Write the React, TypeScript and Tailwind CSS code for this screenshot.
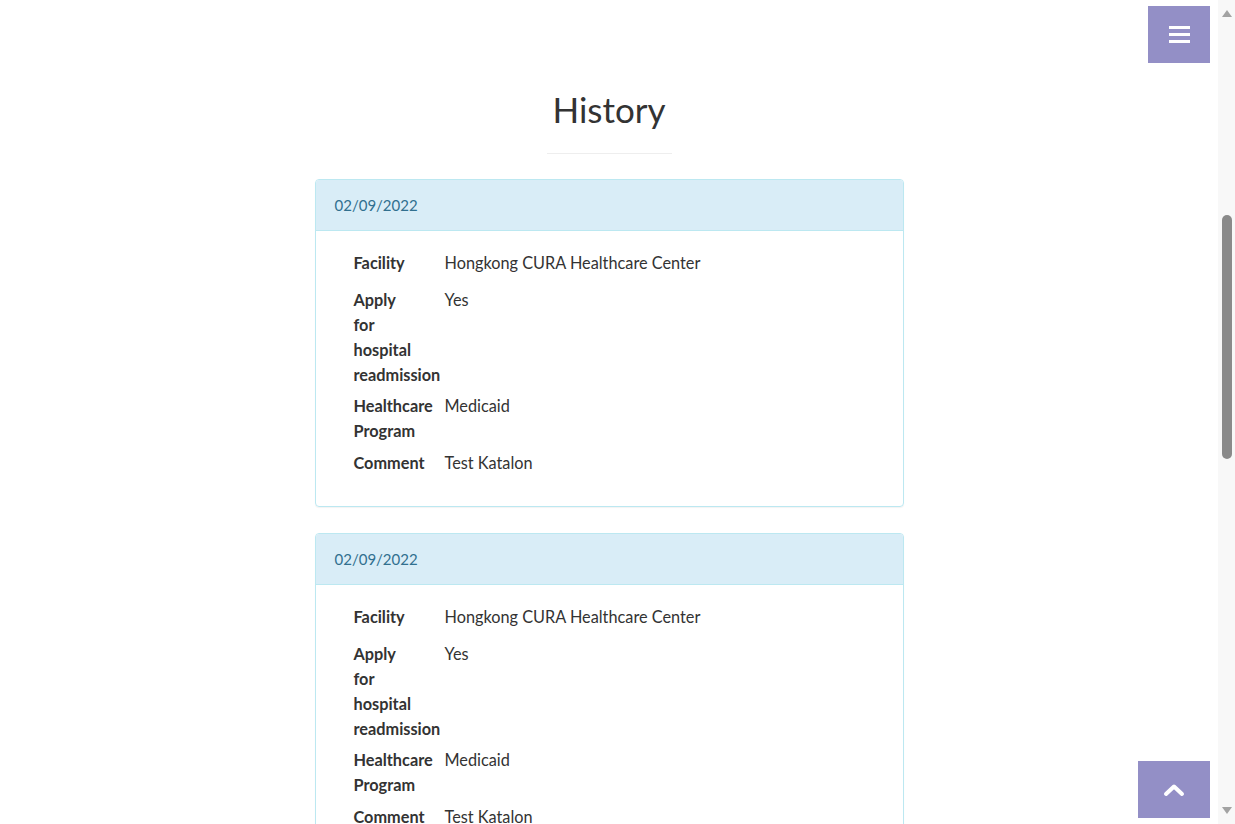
import React from 'react';

const entries = [
  { date: '02/09/2022', facility: 'Hongkong CURA Healthcare Center', readmission: 'Yes', program: 'Medicaid', comment: 'Test Katalon' },
  { date: '02/09/2022', facility: 'Hongkong CURA Healthcare Center', readmission: 'Yes', program: 'Medicaid', comment: 'Test Katalon' },
];

const Row = ({ label, value, className = '' }: { label: string; value: string; className?: string }) => (
  <div className={`grid grid-cols-[91px_1fr] ${className}`}>
    <div className="font-bold text-[#333] whitespace-nowrap">
      {label.split(' ').map((w, i) => (
        <span key={i} className="block">{w}</span>
      ))}
    </div>
    <div className="text-[#333]">{value}</div>
  </div>
);

// page scrollbar as seen in the screenshot
const ScrollBar = () => (
  <div className="w-[17px] h-screen bg-[#f8f8f8] flex flex-col items-center justify-between py-[10px] shrink-0">
    <svg width="10" height="7" viewBox="0 0 10 7"><path d="M5 0 L10 7 L0 7 Z" fill="#a3a3a3" /></svg>
    <div className="flex-1 w-full flex flex-col items-center">
      <div className="h-[198px]" />
      <div className="w-[10px] h-[244px] rounded-full bg-[#8a8a8a]" />
    </div>
    <svg width="10" height="7" viewBox="0 0 10 7"><path d="M0 0 L10 0 L5 7 Z" fill="#a3a3a3" /></svg>
  </div>
);

export default function App() {
  return (
    <div className="h-screen overflow-hidden flex bg-white font-['Lato','Liberation_Sans',sans-serif] text-[16.3px] leading-[25px] text-[#333]">
      <main className="flex-1 min-w-0 overflow-hidden">
        <section className="pt-[80px]">
          <div className="flex flex-col items-center">
            <h2 className="text-[35px] leading-[58px] font-normal text-[#333]">History</h2>
            <hr className="w-[125px] mt-[15px] border-0 border-t border-[#eee]" />
          </div>

          <div className="w-[589px] mx-auto mt-[25px] flex flex-col gap-[26px]">
            {entries.map((e, i) => (
              <div key={i} className="border border-[#bce8f1] rounded-[4px] shadow-[0_1px_1px_rgba(0,0,0,0.05)] overflow-hidden">
                <div className="h-[51px] bg-[#d9edf7] border-b border-[#bce8f1] px-[19px] flex items-center text-[#31708f] text-[15px]">
                  {e.date}
                </div>
                <div className="pl-[38px] pr-[15px] pt-[19px] pb-[31px]">
                  <Row label="Facility" value={e.facility} className="mb-[12px]" />
                  <Row label="Apply for hospital readmission" value={e.readmission} className="mb-[6px]" />
                  <Row label="Healthcare Program" value={e.program} className="mb-[7px]" />
                  <Row label="Comment" value={e.comment} />
                </div>
              </div>
            ))}
          </div>
        </section>
      </main>

      <ScrollBar />

      {/* Menu toggle */}
      <button className="fixed top-[6px] right-[25px] w-[62px] h-[57px] bg-[#938fc6] flex flex-col items-center justify-center gap-[4px]">
        <span className="block w-[21px] h-[3px] bg-white" />
        <span className="block w-[21px] h-[3px] bg-white" />
        <span className="block w-[21px] h-[3px] bg-white" />
      </button>

      {/* Back to top */}
      <button className="fixed bottom-[6px] right-[25px] w-[72px] h-[57px] bg-[#938fc6] flex items-center justify-center">
        <svg width="22" height="14" viewBox="0 0 22 14" fill="none">
          <path d="M3 11 L11 3.5 L19 11" stroke="white" strokeWidth="4" strokeLinecap="round" strokeLinejoin="round" />
        </svg>
      </button>
    </div>
  );
}
